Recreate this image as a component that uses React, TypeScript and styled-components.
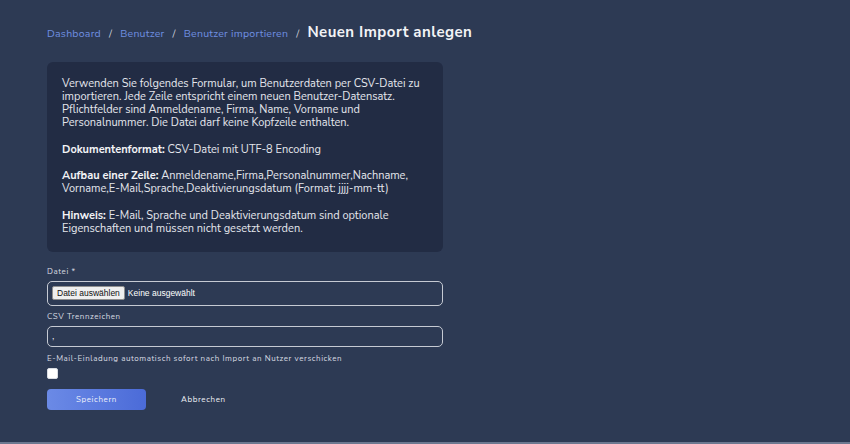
import React from "react";
import styled, { createGlobalStyle } from "styled-components";

const Global = createGlobalStyle`
  html, body { margin: 0; padding: 0; background: #2d3a54; }
  body { font-family: "Nunito Sans", Lato, "Open Sans", sans-serif; color: #e6e9ef; }
  * { box-sizing: border-box; }
`;

const Page = styled.div`
  width: 850px;
  height: 444px;
  background: #2d3a54;
  padding: 22px 47px 0;
  border-bottom: 2px solid #6c7890;
  overflow: hidden;
`;

const Crumbs = styled.nav`
  display: flex;
  align-items: baseline;
  gap: 8px;
  height: 20px;
  font-size: 10.5px;
  letter-spacing: 0.25px;
`;

const Crumb = styled.a`
  color: #6f8fe0;
  text-decoration: none;
`;

const Sep = styled.span`
  color: #d0d4dc;
`;

const Title = styled.h1`
  margin: 0;
  font-size: 15px;
  font-weight: 700;
  color: #f2f3f6;
  letter-spacing: 0.45px;
`;

const Form = styled.div`
  width: 396px;
  margin-top: 20px;
  display: flex;
  flex-direction: column;
`;

const InfoBox = styled.div`
  background: #222c44;
  border-radius: 6px;
  padding: 15px 15px 17px 15px;
  font-size: 11px;
  line-height: 13px;
  color: #e4e6ec;
  p { margin: 0 0 13.5px; }
  p:last-child { margin-bottom: 0; }
  b { font-weight: 700; color: #f2f3f6; }
`;

const Label = styled.label<{ top: number }>`
  display: block;
  font-size: 8px;
  line-height: 10px;
  letter-spacing: 0.55px;
  color: #d8dbe2;
  margin: ${(p) => p.top}px 0 4px;
`;

const Field = styled.div<{ h: number }>`
  height: ${(p) => p.h}px;
  border: 1px solid #c6cad3;
  border-radius: 5px;
  display: flex;
  align-items: center;
  padding: 0 4px;
  font-family: "Liberation Sans", Arial, sans-serif;
  font-size: 8.5px;
  color: #fff;
`;

const FileBtn = styled.span`
  background: #efefef;
  color: #111;
  border: 1px solid #8f8f8f;
  border-radius: 2px;
  padding: 1px 4px;
  margin-right: 3px;
  font-size: 8.5px;
  line-height: 10px;
`;

const Check = styled.span`
  display: block;
  width: 11px;
  height: 11px;
  border-radius: 2px;
  background: #fff;
  border: 1px solid #d9dce2;
`;

const Actions = styled.div`
  display: flex;
  align-items: center;
  gap: 35px;
  margin-top: 10px;
`;

const Primary = styled.button`
  width: 99px;
  height: 21px;
  border: none;
  border-radius: 4px;
  background: linear-gradient(90deg, #6b8ae6, #4b6bd8);
  color: #eef1fb;
  font-family: inherit;
  font-size: 8px;
  letter-spacing: 0.6px;
`;

const Ghost = styled.button`
  background: none;
  border: none;
  color: #eef0f4;
  font-family: inherit;
  font-size: 8px;
  letter-spacing: 0.6px;
  padding: 0;
`;

export default function App() {
  return (
    <>
      <Global />
      <Page>
        <Crumbs>
          <Crumb href="#">Dashboard</Crumb>
          <Sep>/</Sep>
          <Crumb href="#">Benutzer</Crumb>
          <Sep>/</Sep>
          <Crumb href="#">Benutzer importieren</Crumb>
          <Sep>/</Sep>
          <Title>Neuen Import anlegen</Title>
        </Crumbs>
        <Form>
          <InfoBox>
            <p>
              Verwenden Sie folgendes Formular, um Benutzerdaten per CSV-Datei zu importieren. Jede Zeile
              entspricht einem neuen Benutzer-Datensatz. Pflichtfelder sind Anmeldename, Firma, Name, Vorname
              und Personalnummer. Die Datei darf keine Kopfzeile enthalten.
            </p>
            <p>
              <b>Dokumentenformat:</b> CSV-Datei mit UTF-8 Encoding
            </p>
            <p>
              <b>Aufbau einer Zeile:</b> Anmeldename,Firma,Personalnummer,Nachname,
              Vorname,E-Mail,Sprache,Deaktivierungsdatum (Format: jjjj-mm-tt)
            </p>
            <p>
              <b>Hinweis:</b> E-Mail, Sprache und Deaktivierungsdatum sind optionale Eigenschaften und müssen
              nicht gesetzt werden.
            </p>
          </InfoBox>
          <Label top={15}>Datei *</Label>
          <Field h={25}>
            <FileBtn>Datei auswählen</FileBtn>
            Keine ausgewählt
          </Field>
          <Label top={6}>CSV Trennzeichen</Label>
          <Field h={21}>,</Field>
          <Label top={7}>E-Mail-Einladung automatisch sofort nach Import an Nutzer verschicken</Label>
          <Check />
          <Actions>
            <Primary>Speichern</Primary>
            <Ghost>Abbrechen</Ghost>
          </Actions>
        </Form>
      </Page>
    </>
  );
}
